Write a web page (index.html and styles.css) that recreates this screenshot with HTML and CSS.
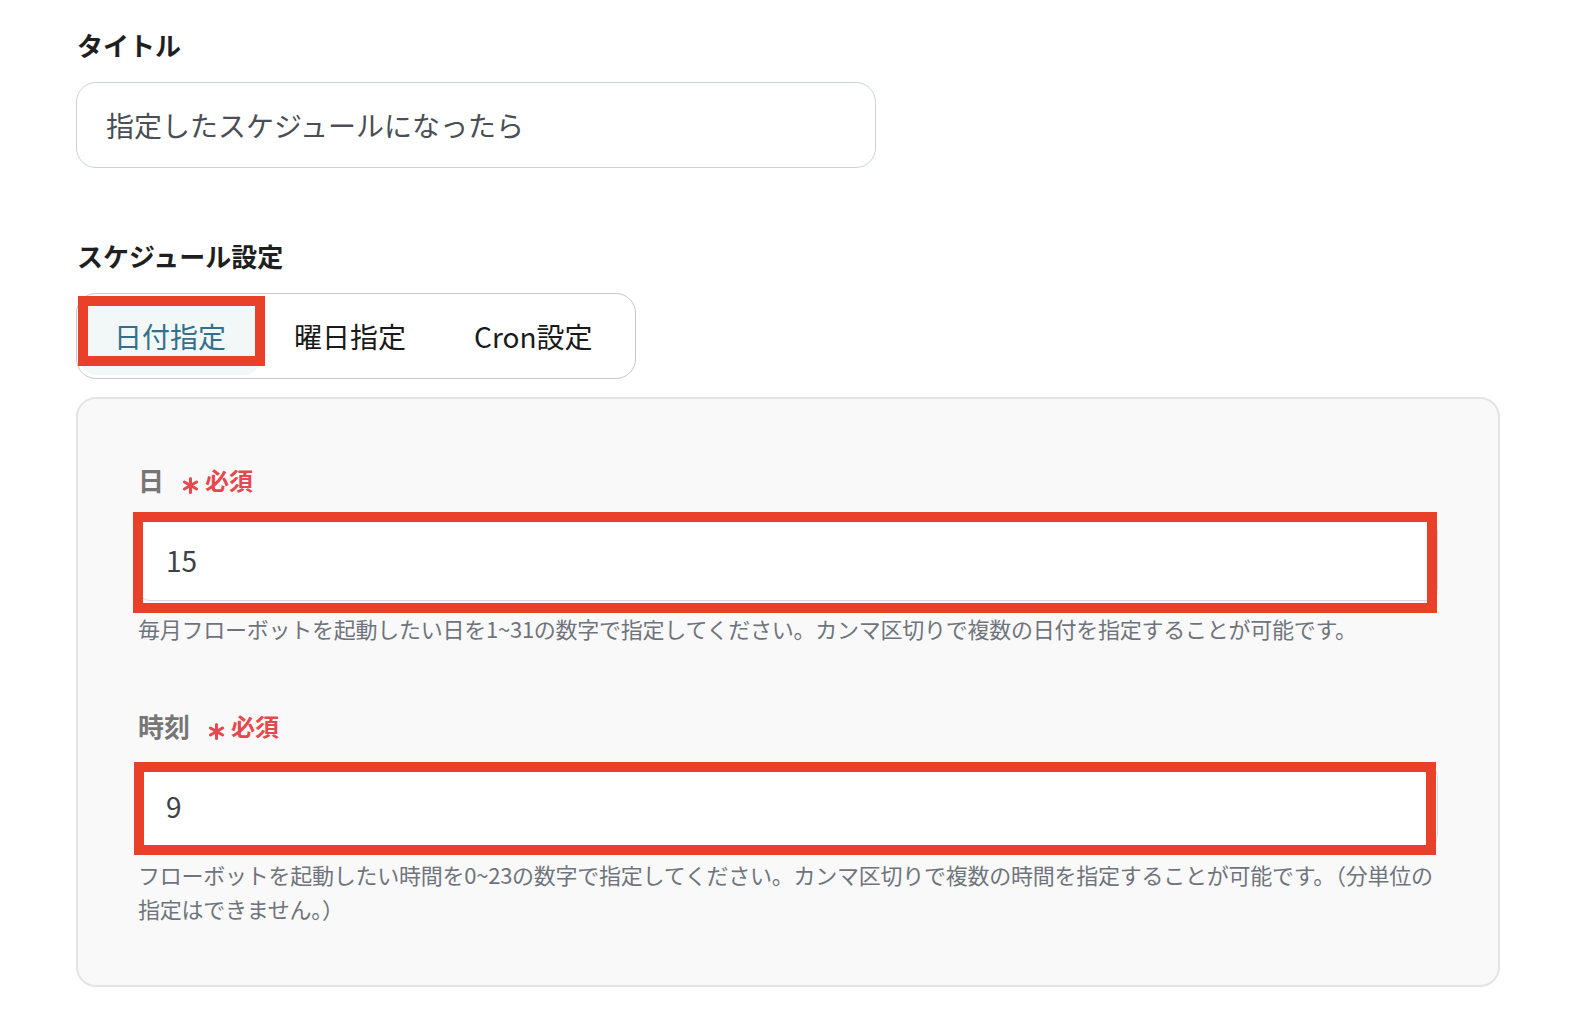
FILE: index.html
```html
<!DOCTYPE html>
<html lang="ja">
<head>
<meta charset="utf-8">
<title>スケジュール設定</title>
<link rel="stylesheet" href="styles.css">
</head>
<body>
<div class="page">
  <div class="section-label">タイトル</div>
  <div class="title-input">指定したスケジュールになったら</div>

  <div class="section-label section-gap">スケジュール設定</div>
  <div class="segment">
    <div class="tab tab-active">日付指定<span class="mark mark-tab"></span></div>
    <div class="tab">曜日指定</div>
    <div class="tab">Cron設定</div>
  </div>

  <div class="panel">
    <div class="field">
      <div class="field-label">
        <span>日</span>
        <span class="req">
          <svg class="ast" width="17" height="17" viewBox="0 0 17 17"><g stroke="#e5484d" stroke-width="3" stroke-linecap="round"><line x1="8.5" y1="1.5" x2="8.5" y2="15.5"/><line x1="2.4" y1="5" x2="14.6" y2="12"/><line x1="2.4" y1="12" x2="14.6" y2="5"/></g></svg>
          <span>必須</span>
        </span>
      </div>
      <div class="input-wrap">
        <div class="input">15</div>
        <span class="mark mark-day"></span>
      </div>
      <p class="help"><span class="line">毎月フローボットを起動したい日を1~31の数字で指定してください。カンマ区切りで複数の日付を指定することが可能です。</span></p>
    </div>

    <div class="field field-gap">
      <div class="field-label">
        <span>時刻</span>
        <span class="req">
          <svg class="ast" width="17" height="17" viewBox="0 0 17 17"><g stroke="#e5484d" stroke-width="3" stroke-linecap="round"><line x1="8.5" y1="1.5" x2="8.5" y2="15.5"/><line x1="2.4" y1="5" x2="14.6" y2="12"/><line x1="2.4" y1="12" x2="14.6" y2="5"/></g></svg>
          <span>必須</span>
        </span>
      </div>
      <div class="input-wrap">
        <div class="input">9</div>
        <span class="mark mark-time"></span>
      </div>
      <p class="help"><span class="line">フローボットを起動したい時間を0~23の数字で指定してください。カンマ区切りで複数の時間を指定することが可能です。（分単位の</span><span class="line">指定はできません。）</span></p>
    </div>
  </div>
</div>
</body>
</html>
```

FILE: styles.css
```css
* { box-sizing: border-box; }

html, body {
  margin: 0;
  padding: 0;
  background: #ffffff;
}

body {
  font-family: "Noto Sans CJK JP", "Noto Sans", sans-serif;
  color: #1f1f1f;
}

.page {
  padding: 27px 0 0 76px;
}

.section-label {
  font-size: 26px;
  font-weight: 700;
  line-height: 36px;
  color: #1f1f1f;
  margin-bottom: 19px;
  padding-left: 1px;
}

.section-gap {
  margin-top: 70px;
}

.title-input {
  width: 800px;
  height: 86px;
  border: 1.5px solid #cdd3da;
  border-radius: 20px;
  background: #fff;
  display: flex;
  align-items: center;
  padding: 0 29px;
  font-size: 28px;
  color: #4a4e55;
}

.segment {
  display: inline-flex;
  height: 86px;
  border: 1.5px solid #c9c9c9;
  border-radius: 20px;
  padding: 3px 8px 3px 3px;
  background: #fff;
}

.tab {
  position: relative;
  display: flex;
  align-items: center;
  padding: 0 34px;
  font-size: 28px;
  color: #1a1a1a;
  border-radius: 16px;
}

.tab-active {
  background: #f2f7f8;
  color: #34708a;
}

.mark {
  position: absolute;
  border: 10px solid #e9402a;
  pointer-events: none;
}

.mark-tab {
  left: -2px;
  top: -1px;
  width: 187px;
  height: 70px;
}

.panel {
  margin-top: 18px;
  width: 1424px;
  border: 2px solid #e4e4e4;
  border-radius: 20px;
  background: #f9f9f9;
  padding: 62px 60px 60px 60px;
}

.field-gap {
  margin-top: 62px;
}

.field-label {
  display: flex;
  align-items: center;
  height: 36px;
  font-size: 26px;
  font-weight: 700;
  color: #767676;
  margin-bottom: 22px;
}

.req {
  display: flex;
  align-items: center;
  margin-left: 18px;
  font-size: 24px;
  color: #e5484d;
}

.ast {
  margin-top: 12px;
  margin-right: 6px;
}

.input-wrap {
  position: relative;
}

.input {
  height: 82px;
  background: #fff;
  border: 1px solid #d5d8dd;
  border-radius: 12px;
  display: flex;
  align-items: center;
  padding-left: 27px;
  font-size: 28px;
  color: #3d4148;
}

.mark-day {
  left: -5px;
  top: -7px;
  width: 1304px;
  height: 101px;
}

.mark-time {
  left: -4px;
  top: -3px;
  width: 1302px;
  height: 93px;
}

.help {
  margin: 10px 0 0 0;
  font-size: 22px;
  letter-spacing: -0.25px;
  line-height: 34px;
  color: #6f747c;
}

.help .line {
  display: block;
  white-space: nowrap;
}
```
